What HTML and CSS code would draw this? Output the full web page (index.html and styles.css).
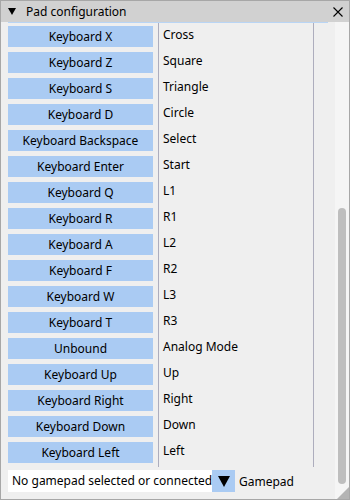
FILE: index.html
```html
<!DOCTYPE html>
<html>
<head>
    <meta charset="UTF-8">
    <title>Pad configuration</title>
    <link rel="stylesheet" href="styles.css">
</head>
<body>
    <div class="window">
        <div class="titlebar">
            <span class="collapse"></span>
            <span class="title">Pad configuration</span>
            <svg class="close" width="10" height="10" viewBox="0 0 10 10">
                <path d="M0.5 0.5 L9.5 9.5 M9.5 0.5 L0.5 9.5" stroke="#000" stroke-width="1.1" fill="none"/>
            </svg>
        </div>
        <div class="body">
            <div class="content">
                <div class="topline"></div>
                <div class="table">
                    <div class="col keys">
                        <div class="btn">Keyboard X</div>
                        <div class="btn">Keyboard Z</div>
                        <div class="btn">Keyboard S</div>
                        <div class="btn">Keyboard D</div>
                        <div class="btn">Keyboard Backspace</div>
                        <div class="btn">Keyboard Enter</div>
                        <div class="btn">Keyboard Q</div>
                        <div class="btn">Keyboard R</div>
                        <div class="btn">Keyboard A</div>
                        <div class="btn">Keyboard F</div>
                        <div class="btn">Keyboard W</div>
                        <div class="btn">Keyboard T</div>
                        <div class="btn">Unbound</div>
                        <div class="btn">Keyboard Up</div>
                        <div class="btn">Keyboard Right</div>
                        <div class="btn">Keyboard Down</div>
                        <div class="btn">Keyboard Left</div>
                    </div>
                    <div class="col names">
                        <div class="name">Cross</div>
                        <div class="name">Square</div>
                        <div class="name">Triangle</div>
                        <div class="name">Circle</div>
                        <div class="name">Select</div>
                        <div class="name">Start</div>
                        <div class="name">L1</div>
                        <div class="name">R1</div>
                        <div class="name">L2</div>
                        <div class="name">R2</div>
                        <div class="name">L3</div>
                        <div class="name">R3</div>
                        <div class="name">Analog Mode</div>
                        <div class="name">Up</div>
                        <div class="name">Right</div>
                        <div class="name">Down</div>
                        <div class="name">Left</div>
                    </div>
                </div>
                <div class="footer">
                    <div class="combo">No gamepad selected or connected</div>
                    <div class="combo-arrow"><span class="arrow"></span></div>
                    <span class="combo-label">Gamepad</span>
                </div>
            </div>
            <div class="scrollbar">
                <div class="thumb"></div>
            </div>
        </div>
        <div class="grip"></div>
    </div>
</body>
</html>
```

FILE: styles.css
```css
body{
    margin: 0;
    font-family: "Noto Sans", sans-serif;
    font-size: 12px;
    color: #000;
}

.window{
    position: relative;
    width: 350px;
    height: 500px;
    box-sizing: border-box;
    border: 1px solid #a7a7a7;
    background-color: #efefef;
    display: flex;
    flex-direction: column;
    overflow: hidden;
}

.titlebar{
    height: 21px;
    background-color: #d1d1d1;
    display: flex;
    align-items: center;
    padding-left: 7px;
    padding-right: 6px;
}

.collapse{
    width: 0;
    height: 0;
    border-left: 4px solid transparent;
    border-right: 4px solid transparent;
    border-top: 7px solid #000;
    margin-right: 10px;
}

.title{
    flex: 1;
    line-height: 21px;
}

.close{
    display: block;
}

.body{
    flex: 1;
    display: flex;
}

.content{
    flex: 1;
    padding-left: 7px;
}

.topline{
    width: 320px;
    height: 1px;
    background-color: #b9d5f5;
}

.table{
    display: flex;
}

.col{
    display: flex;
    flex-direction: column;
    gap: 5px;
    padding-top: 3px;
    padding-bottom: 4px;
    border-right: 1px solid #adadbd;
}

.keys{
    width: 145px;
    padding-right: 5px;
}

.names{
    width: 150px;
    padding-left: 4px;
}

.btn{
    height: 21px;
    line-height: 21px;
    text-align: center;
    background-color: #aacbf3;
    white-space: nowrap;
}

.name{
    height: 21px;
    line-height: 18px;
}

.footer{
    display: flex;
    align-items: center;
    margin-top: 3px;
    height: 22px;
}

.combo{
    width: 200px;
    height: 22px;
    line-height: 22px;
    padding-left: 4px;
    background-color: #fff;
    white-space: nowrap;
}

.combo-arrow{
    width: 23px;
    height: 22px;
    background-color: #aacbf3;
    display: flex;
    align-items: center;
    justify-content: center;
}

.arrow{
    width: 0;
    height: 0;
    border-left: 6px solid transparent;
    border-right: 6px solid transparent;
    border-top: 11px solid #000;
}

.combo-label{
    margin-left: 4px;
}

.scrollbar{
    width: 14px;
    background-color: #f5f5f5;
    padding-top: 186px;
    padding-left: 3px;
    box-sizing: border-box;
}

.thumb{
    width: 8px;
    height: 276px;
    border-radius: 4px;
    background-color: #bebebe;
}

.grip{
    position: absolute;
    right: 0;
    bottom: 0;
    width: 0;
    height: 0;
    border-left: 12px solid transparent;
    border-bottom: 12px solid #b4b4b4;
}
```
